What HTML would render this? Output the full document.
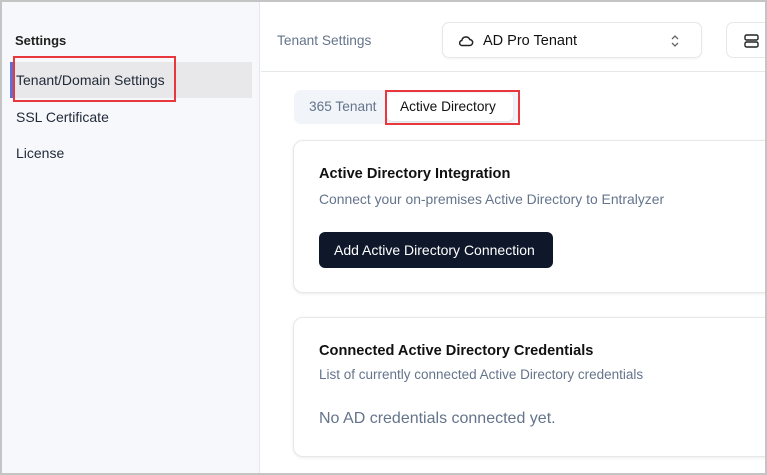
<!DOCTYPE html>
<html><head><meta charset="utf-8"><style>
*{box-sizing:border-box;margin:0;padding:0}
body{width:767px;height:475px;overflow:hidden;font-family:"Liberation Sans",sans-serif;background:#c4c4c4;position:relative}
.frame{position:absolute;left:2px;top:2px;width:763px;height:471px;background:#fff;overflow:hidden}
.side{position:absolute;left:0;top:0;width:258px;height:100%;background:#f7f8fc;border-right:1px solid #e5e7eb}
.abs{position:absolute;white-space:nowrap}
.main{position:absolute;left:259px;top:0;right:0;height:100%;background:#fff}
.card{position:absolute;left:32px;width:520px;border:1px solid #e5e7eb;border-radius:10px;background:#fff;box-shadow:0 1px 3px rgba(0,0,0,.08)}
.red{position:absolute;border:2px solid #e8383d}
</style></head><body><div class="frame">
<div class="side">
  <div class="abs" style="left:13px;top:31px;font-size:13px;font-weight:bold;color:#222">Settings</div>
  <div class="abs" style="left:8px;top:60px;width:242px;height:36px;background:#e8e8ea"></div>
  <div class="abs" style="left:8px;top:60px;width:3px;height:36px;background:#5b6fd6"></div>
  <div class="abs" style="left:14px;top:70px;font-size:14px;color:#1f2937">Tenant/Domain Settings</div>
  <div class="red" style="left:11px;top:54px;width:163px;height:46px"></div>
  <div class="abs" style="left:14px;top:107px;font-size:14px;color:#1f2937">SSL Certificate</div>
  <div class="abs" style="left:14px;top:143px;font-size:14px;color:#1f2937">License</div>
</div>
<div class="main">
  <div class="abs" style="left:16px;top:31px;font-size:13.7px;color:#64748b">Tenant Settings</div>
  <div class="abs" style="left:181px;top:20px;width:260px;height:36px;border:1px solid #e5e7eb;border-radius:7px;box-shadow:0 1px 2px rgba(0,0,0,.05)">
    <svg class="abs" style="left:15px;top:11px" width="16" height="14" viewBox="0 0 16 14"><path d="M4.5 11.5h7a3 3 0 0 0 .3-6A4.2 4.2 0 0 0 3.8 6.5a2.5 2.5 0 0 0 .7 5z" fill="none" stroke="#222" stroke-width="1.5"/></svg>
    <div class="abs" style="left:40px;top:10px;font-size:14.5px;color:#111">AD Pro Tenant</div>
    <svg class="abs" style="left:227px;top:11px" width="10" height="14" viewBox="0 0 10 14"><path d="M2 5l3-3 3 3M2 9l3 3 3-3" fill="none" stroke="#666" stroke-width="1.3"/></svg>
  </div>
  <div class="abs" style="left:465px;top:20px;width:60px;height:36px;border:1px solid #e5e7eb;border-radius:7px">
    <svg class="abs" style="left:17px;top:11px" width="16" height="14" viewBox="0 0 16 14"><rect x="1" y="1" width="13" height="5" rx="1.5" fill="none" stroke="#222" stroke-width="1.4"/><rect x="1" y="8" width="13" height="5" rx="1.5" fill="none" stroke="#222" stroke-width="1.4"/></svg>
  </div>
  <div class="abs" style="left:0;top:69px;right:0;height:1px;background:#e5e7eb"></div>
  <div class="abs" style="left:33px;top:88px;width:224px;height:34px;background:#f1f5f9;border-radius:7px"></div>
  <div class="abs" style="left:48px;top:97px;font-size:13.7px;color:#64748b">365 Tenant</div>
  <div class="abs" style="left:126px;top:91px;width:126px;height:28px;background:#fff;border-radius:5px;box-shadow:0 1px 2px rgba(0,0,0,.1)"></div>
  <div class="abs" style="left:139px;top:97px;font-size:13.7px;color:#111">Active Directory</div>
  <div class="red" style="left:124px;top:88px;width:135px;height:35px"></div>
  <div class="card" style="top:138px;height:153px">
    <div class="abs" style="left:25px;top:25px;font-size:14.6px;font-weight:bold;color:#111">Active Directory Integration</div>
    <div class="abs" style="left:25px;top:50px;font-size:13.9px;color:#64748b">Connect your on-premises Active Directory to Entralyzer</div>
    <div class="abs" style="left:25px;top:91px;width:234px;height:36px;background:#0f172a;border-radius:6px;color:#fff;font-size:14px;line-height:36px;padding-left:15px">Add Active Directory Connection</div>
  </div>
  <div class="card" style="top:315px;height:140px">
    <div class="abs" style="left:25px;top:25px;font-size:14.6px;font-weight:bold;color:#111">Connected Active Directory Credentials</div>
    <div class="abs" style="left:25px;top:49px;font-size:13.5px;color:#64748b">List of currently connected Active Directory credentials</div>
    <div class="abs" style="left:25px;top:92px;font-size:16px;color:#64748b">No AD credentials connected yet.</div>
  </div>
</div>
</div></body></html>
